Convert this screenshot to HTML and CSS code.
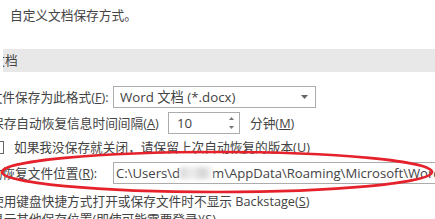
FILE: index.html
```html
<!DOCTYPE html>
<html lang="zh-CN">
<head>
  <meta charset="UTF-8">
  <title>Word 选项 - 保存</title>
  <link rel="stylesheet" href="styles.css">
</head>
<body>
  <div class="page">
    <div class="intro">自定义文档保存方式。</div>

    <div class="section"><span class="section-title">保存文档</span></div>

    <div class="options">
      <div class="row field-row">
        <span class="label">将文件保存为此格式(<u>F</u>):</span>
        <div class="select">
          <span>Word 文档 (*.docx)</span>
          <svg class="caret" viewBox="0 0 7 4" width="7" height="4"><path d="M0 0h7L3.5 4z"/></svg>
        </div>
      </div>

      <div class="row spin-row">
        <span class="checkbox"></span>
        <span class="label">保存自动恢复信息时间间隔(<u>A</u>)</span>
        <div class="spin">
          <span>10</span>
          <svg class="spin-arrows" viewBox="0 0 5 12" width="5" height="12">
            <path d="M0 3h5L2.5 0z"/>
            <path d="M0 9h5L2.5 12z"/>
          </svg>
        </div>
        <span class="unit">分钟(<u>M</u>)</span>
      </div>

      <div class="row check-row sub">
        <span class="checkbox"></span>
        <span>如果我没保存就关闭，请保留上次自动恢复的版本(<u>U</u>)</span>
      </div>

      <div class="row field-row location">
        <span class="label">自动恢复文件位置(<u>R</u>):</span>
        <div class="textbox">C:\Users\d<span class="smudge"></span>m\AppData\Roaming\Microsoft\Word\</div>
      </div>

      <div class="row check-row short">
        <span class="checkbox"></span>
        <span>使用键盘快捷方式打开或保存文件时不显示 Backstage(<u>S</u>)</span>
      </div>

      <div class="row check-row short">
        <span class="checkbox"></span>
        <span>显示其他保存位置(即使可能需要登录)(<u>S</u>)</span>
      </div>
    </div>
  </div>

  <svg class="annotation" viewBox="0 0 435 219" width="435" height="219">
    <ellipse cx="217" cy="172" rx="215" ry="20" fill="none" stroke="#e5222b" stroke-width="2.6"/>
  </svg>
</body>
</html>
```

FILE: styles.css
```css
* {
  margin: 0;
  padding: 0;
  box-sizing: border-box;
}

body {
  width: 435px;
  height: 219px;
  overflow: hidden;
  background: #fff;
  color: #434343;
  font-family: "Open Sans", "Noto Sans CJK SC", sans-serif;
  font-size: 12.7px;
  position: relative;
}

u {
  text-decoration: underline;
  text-underline-offset: 1px;
}

.page {
  padding-top: 5px;
}

.intro {
  padding-left: 10px;
  line-height: 20px;
  height: 20px;
}

.section {
  margin: 24px 0 0 3px;
  height: 23px;
  line-height: 23px;
  background: #e8e8e8;
  overflow: hidden;
  white-space: nowrap;
}

.section-title {
  display: inline-block;
  margin-left: -36px;
}

.options {
  margin: 14px 0 0 -29px;
  white-space: nowrap;
}

.row {
  display: flex;
  align-items: center;
  height: 22px;
  line-height: 22px;
}

.field-row .label {
  width: 142px;
  padding-left: 6px;
  flex-shrink: 0;
}

.select {
  width: 203px;
  height: 22px;
  border: 1px solid #acacac;
  display: flex;
  align-items: center;
  justify-content: space-between;
  padding: 0 7px 0 6px;
  line-height: 20px;
  font-size: 13.3px;
}

.caret {
  fill: #666;
}

.spin-row {
  margin-top: 4px;
}

.checkbox {
  width: 13px;
  height: 13px;
  border: 1px solid #666;
  background: #fff;
  flex-shrink: 0;
  margin-right: 7px;
}

.spin-row .label {
  width: 177px;
  flex-shrink: 0;
}

.spin {
  width: 72px;
  height: 22px;
  border: 1px solid #acacac;
  display: flex;
  align-items: center;
  justify-content: space-between;
  padding: 0 5px 0 8px;
  line-height: 20px;
  font-size: 13.3px;
}

.spin-arrows {
  fill: #777;
}

.unit {
  margin-left: 10px;
}

.check-row.sub {
  margin-top: 2px;
  padding-left: 20px;
}

.check-row.sub .checkbox {
  margin-right: 10px;
}

.location {
  margin-top: 4px;
}

.textbox {
  width: 340px;
  height: 22px;
  border: 1px solid #acacac;
  padding-left: 2px;
  line-height: 20px;
  font-size: 13.1px;
  overflow: hidden;
  flex-shrink: 0;
}

.smudge {
  display: inline-block;
  width: 32px;
  height: 12px;
  vertical-align: -1px;
  background: linear-gradient(90deg, #d8d8d8, #eeeeee 40%, #d4d4d4 70%, #f2f2f2);
  filter: blur(2px);
}

.check-row.short {
  height: 18px;
  line-height: 18px;
}

.location + .short {
  margin-top: 8px;
}

.annotation {
  position: absolute;
  left: 0;
  top: 0;
  pointer-events: none;
}
```
